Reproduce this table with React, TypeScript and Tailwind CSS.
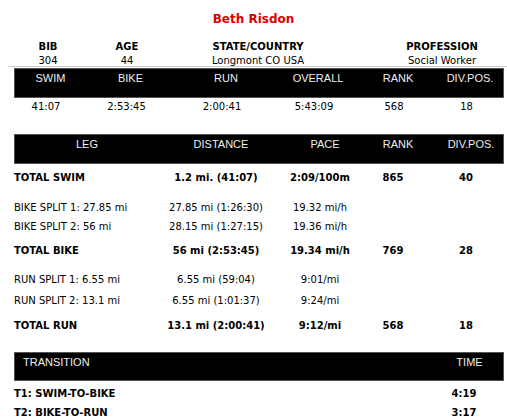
const body = "font-['DejaVu_Sans',Verdana,sans-serif] text-[10px] text-black"
const head = "font-['Liberation_Sans',Arial,sans-serif] text-[11px] text-[#eeeeee]"

const info = [
  { label: 'BIB', value: '304' },
  { label: 'AGE', value: '44' },
  { label: 'STATE/COUNTRY', value: 'Longmont CO USA' },
  { label: 'PROFESSION', value: 'Social Worker' },
]

const summaryHead = ['SWIM', 'BIKE', 'RUN', 'OVERALL', 'RANK', 'DIV.POS.']
const summary = ['41:07', '2:53:45', '2:00:41', '5:43:09', '568', '18']

type Leg = {
  leg: string
  distance: string
  pace: string
  rank?: string
  div?: string
  total?: boolean
  row: string
}

const legs: Leg[] = [
  { leg: 'TOTAL SWIM', distance: '1.2 mi. (41:07)', pace: '2:09/100m', rank: '865', div: '40', total: true, row: 'h-[26px]' },
  { leg: 'BIKE SPLIT 1: 27.85 mi', distance: '27.85 mi (1:26:30)', pace: '19.32 mi/h', row: 'mt-[7px] h-[20px]' },
  { leg: 'BIKE SPLIT 2: 56 mi', distance: '28.15 mi (1:27:15)', pace: '19.36 mi/h', row: 'h-[19px]' },
  { leg: 'TOTAL BIKE', distance: '56 mi (2:53:45)', pace: '19.34 mi/h', rank: '769', div: '28', total: true, row: 'mt-[1px] h-[26px]' },
  { leg: 'RUN SPLIT 1: 6.55 mi', distance: '6.55 mi (59:04)', pace: '9:01/mi', row: 'mt-[6px] h-[21px]' },
  { leg: 'RUN SPLIT 2: 13.1 mi', distance: '6.55 mi (1:01:37)', pace: '9:24/mi', row: 'h-[21px]' },
  { leg: 'TOTAL RUN', distance: '13.1 mi (2:00:41)', pace: '9:12/mi', rank: '568', div: '18', total: true, row: 'mt-[1px] h-[26px]' },
]

const legCols = 'grid grid-cols-[136px_132px_76px_70px_76px]'

export default function App() {
  return (
    <div className={`w-[507px] bg-white ${body}`}>
      <div className="flex h-[38px] items-center justify-center text-[12px] font-bold text-[#dd0000]">
        Beth Risdon
      </div>

      <div className="ml-[14px] grid grid-cols-[68px_90px_172px_36px_124px]">
        {info.map((item, i) => (
          <div key={item.label} className={`flex flex-col items-center ${i === 3 ? 'col-start-5' : ''}`}>
            <div className="flex h-[16px] items-center font-bold">{item.label}</div>
            <div className="flex h-[12px] items-center">{item.value}</div>
          </div>
        ))}
      </div>

      <div className="ml-[8px] h-px bg-[#cccccc]" />

      <div className="ml-[14px] w-[490px]">
        <div className="mt-px h-[30px] border border-[#555555] bg-black pt-[2px]">
          <div className="grid grid-cols-[63px_97px_94px_90px_70px_74px]">
            {summaryHead.map((h) => (
              <div key={h} className={`pl-[8px] text-center leading-[14px] ${head}`}>{h}</div>
            ))}
          </div>
        </div>
        <div className="grid h-[16px] grid-cols-[64px_97px_94px_90px_70px_75px] items-center">
          {summary.map((v, i) => (
            <div key={i} className="text-center">{v}</div>
          ))}
        </div>

        <div className="mt-[20px] h-[30px] border border-[#555555] bg-black pt-[2px]">
          <div className={legCols}>
            {['LEG', 'DISTANCE', 'PACE', 'RANK', 'DIV.POS.'].map((h) => (
              <div key={h} className={`pl-[8px] text-center leading-[14px] ${head}`}>{h}</div>
            ))}
          </div>
        </div>

        {legs.map((l) => (
          <div key={l.leg} className={`${legCols} items-center ${l.row} ${l.total ? 'font-bold' : ''}`}>
            <div>{l.leg}</div>
            <div className="text-center">{l.distance}</div>
            <div className="text-center">{l.pace}</div>
            <div className="text-center">{l.rank}</div>
            <div className="text-center">{l.div}</div>
          </div>
        ))}

        <div className="mt-[14px] h-[29px] border border-[#555555] bg-black pt-[2px]">
          <div className="grid grid-cols-[413px_75px]">
            <div className={`pl-[8px] leading-[14px] ${head}`}>TRANSITION</div>
            <div className={`pl-[8px] text-center leading-[14px] ${head}`}>TIME</div>
          </div>
        </div>

        <div className="mt-[3px] grid h-[19px] grid-cols-[414px_76px] items-center font-bold">
          <div>T1: SWIM-TO-BIKE</div>
          <div className="pr-[4px] text-center">4:19</div>
        </div>
        <div className="grid h-[19px] grid-cols-[414px_76px] items-center font-bold">
          <div>T2: BIKE-TO-RUN</div>
          <div className="pr-[4px] text-center">3:17</div>
        </div>
      </div>
    </div>
  )
}
